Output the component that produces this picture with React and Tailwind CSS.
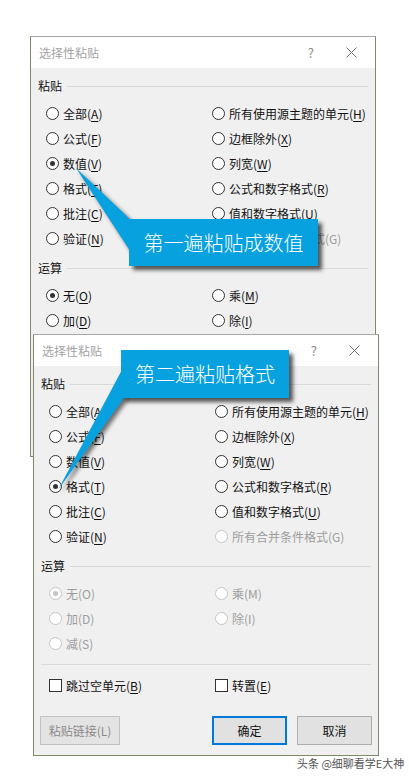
import React from 'react';

const pasteItems = [
    ['全部', 'A'], ['所有使用源主题的单元', 'H'],
    ['公式', 'F'], ['边框除外', 'X'],
    ['数值', 'V'], ['列宽', 'W'],
    ['格式', 'T'], ['公式和数字格式', 'R'],
    ['批注', 'C'], ['值和数字格式', 'U'],
    ['验证', 'N'], ['所有合并条件格式', 'G'],
];

const opItems = [['无', 'O'], ['乘', 'M'], ['加', 'D'], ['除', 'I'], ['减', 'S']];

function Radio({ checked, disabled }) {
    return (
        <span className={`flex h-[13px] w-[13px] shrink-0 items-center justify-center rounded-full border bg-white ${disabled ? 'border-[#c4c4c4]' : 'border-[#333333]'}`}>
            {checked && <span className={`h-[5px] w-[5px] rounded-full ${disabled ? 'bg-[#c4c4c4]' : 'bg-[#333333]'}`} />}
        </span>
    );
}

function Label({ text, hotkey, disabled }) {
    return (
        <span className={`whitespace-nowrap text-[12px] leading-none ${disabled ? 'text-[#9d9d9d]' : 'text-[#111111]'}`}>
            {text}(
            {disabled ? hotkey : <span className="underline underline-offset-2">{hotkey}</span>}
            )
        </span>
    );
}

function Option({ text, hotkey, checked, disabled }) {
    return (
        <div className="flex h-[25px] items-center gap-[4px]">
            <Radio checked={checked} disabled={disabled} />
            <Label text={text} hotkey={hotkey} disabled={disabled} />
        </div>
    );
}

function Header({ children }) {
    return (
        <div className="flex h-[18px] items-center px-[7px]">
            <span className="text-[12px] leading-none text-[#111111]">{children}</span>
            <div className="ml-[5px] h-px flex-1 bg-[#d9d9d9]" />
        </div>
    );
}

function Checkbox({ text, hotkey }) {
    return (
        <div className="flex h-[25px] items-center gap-[4px]">
            <span className="h-[13px] w-[13px] shrink-0 border border-[#333333] bg-white" />
            <Label text={text} hotkey={hotkey} />
        </div>
    );
}

function Dialog({ checkedPaste, opsDisabled, className }) {
    return (
        <div className={`absolute w-[346px] overflow-hidden border border-[#7d8a68] border-t-[#a8a8a8] bg-[#f0f0f0] ${className}`}>
            {/* Title bar */}
            <div className="flex h-[31px] items-center bg-white pl-[8px] pr-[18px]">
                <span className="text-[12px] text-[#a3a3a3]">选择性粘贴</span>
                <div className="flex-1" />
                <span className="text-[13px] text-[#8a8a8a]">?</span>
                <svg className="ml-[32px]" width="11" height="11" viewBox="0 0 11 11">
                    <path d="M0.5 0.5L10.5 10.5M10.5 0.5L0.5 10.5" stroke="#6f6f6f" strokeWidth="1" fill="none" />
                </svg>
            </div>

            <div className="pt-[9px]">
                <Header>粘贴</Header>
                <div className="mt-[6px] grid grid-cols-[166px_1fr] pl-[15px]">
                    {pasteItems.map(([t, k]) => (
                        <Option key={k} text={t} hotkey={k} checked={t === checkedPaste} disabled={k === 'G'} />
                    ))}
                </div>

                <div className="mt-2">
                    <Header>运算</Header>
                </div>
                <div className="mt-[6px] grid grid-cols-[166px_1fr] pl-[15px]">
                    {opItems.map(([t, k]) => (
                        <Option key={k} text={t} hotkey={k} checked={k === 'O'} disabled={opsDisabled} />
                    ))}
                </div>

                <div className="mx-[7px] mt-[8px] h-px bg-[#d9d9d9]" />

                <div className="mt-[8px] grid grid-cols-[166px_1fr] pl-[15px]">
                    <Checkbox text="跳过空单元" hotkey="B" />
                    <Checkbox text="转置" hotkey="E" />
                </div>

                <div className="mt-[18px] flex justify-between px-[6px] pb-[10px]">
                    <button className="h-[29px] w-[80px] border border-[#c2c2c2] bg-[#e3e3e3] text-[12px] text-[#8a8a8a]">
                        粘贴链接(L)
                    </button>
                    <div className="flex gap-[10px]">
                        <button className="h-[29px] w-[75px] border-2 border-[#0078d7] bg-[#e1e1e1] text-[12px] text-[#111111]">
                            确定
                        </button>
                        <button className="h-[29px] w-[75px] border border-[#adadad] bg-[#e1e1e1] text-[12px] text-[#111111]">
                            取消
                        </button>
                    </div>
                </div>
            </div>
        </div>
    );
}

function Callout({ children, className }) {
    return (
        <div className={`absolute flex items-center justify-center bg-[#08a1e0] text-[20px] font-light text-white shadow-[4px_4px_4px_rgba(0,0,0,0.65)] ${className}`}>
            {children}
        </div>
    );
}

export default function App() {
    return (
        <div
            className="relative h-[780px] w-[409px] overflow-hidden bg-white"
            style={{ fontFamily: '"Noto Sans CJK SC", "Noto Sans", sans-serif' }}
        >
            <Dialog className="left-[30px] top-[36px] h-[421px]" checkedPaste="数值" opsDisabled={false} />

            {/* first callout */}
            <svg className="absolute left-0 top-0" width="409" height="780" style={{ filter: 'drop-shadow(3px 3px 2px rgba(0,0,0,0.55))' }}>
                <polygon points="76,168 132,221 132,254" fill="#08a1e0" />
            </svg>
            <Callout className="left-[129px] top-[219px] h-[47px] w-[189px]">第一遍粘贴成数值</Callout>

            <Dialog className="left-[33px] top-[334px] h-[422px]" checkedPaste="格式" opsDisabled />

            {/* second callout */}
            <svg className="absolute left-0 top-0" width="409" height="780" style={{ filter: 'drop-shadow(3px 3px 2px rgba(0,0,0,0.55))' }}>
                <polygon points="58,490 124,366 124,398" fill="#08a1e0" />
            </svg>
            <Callout className="left-[121px] top-[350px] h-[48px] w-[168px]">第二遍粘贴格式</Callout>

            <div className="absolute left-[297px] top-[755px] whitespace-nowrap text-[11px] text-[#555555]">
                头条 @细聊看学E大神
            </div>
        </div>
    );
}
